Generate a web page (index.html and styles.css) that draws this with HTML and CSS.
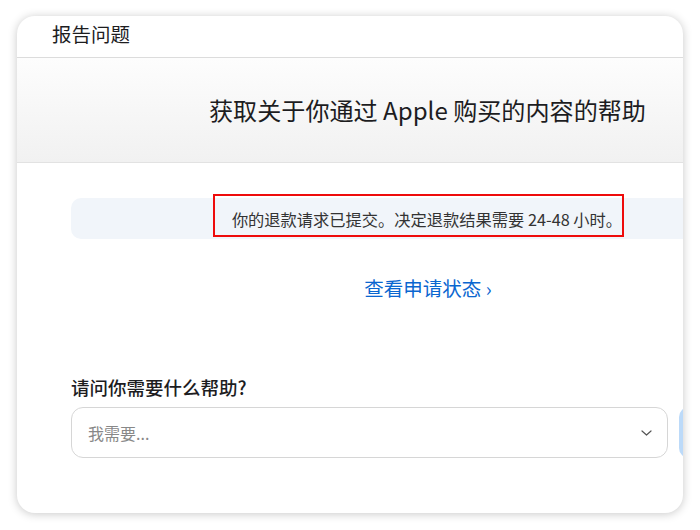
FILE: index.html
```html
<!DOCTYPE html>
<html lang="zh-CN">
<head>
<meta charset="utf-8">
<title>报告问题</title>
<link rel="stylesheet" href="styles.css">
</head>
<body>
<div class="card">
  <header class="topbar">报告问题</header>
  <section class="hero">
    <h1 class="hero-title">获取关于你通过 Apple 购买的内容的帮助</h1>
  </section>
  <main class="content">
    <div class="notice">
      <p class="notice-text">你的退款请求已提交。决定退款结果需要 24-48 小时。</p>
      <div class="highlight"></div>
    </div>
    <a class="status-link" href="#">查看申请状态 ›</a>
    <label class="question">请问你需要什么帮助?</label>
    <div class="select-row">
      <div class="select">
        <span class="placeholder">我需要...</span>
        <svg class="chevron" width="11" height="6" viewBox="0 0 11 6"><path d="M1 1 L5.5 5 L10 1" fill="none" stroke="#555" stroke-width="1.2" stroke-linecap="round" stroke-linejoin="round"/></svg>
      </div>
      <div class="next-btn"></div>
    </div>
  </main>
</div>
</body>
</html>
```
FILE: styles.css
```css
* { box-sizing: border-box; }
html, body { margin: 0; padding: 0; background: #fff; }
body {
  font-family: "Noto Sans CJK SC", "Noto Sans", sans-serif;
  color: #1d1d1f;
  padding: 16px 17px 17px 17px;
}
.card {
  width: 666px;
  height: 497px;
  background: #fff;
  border-radius: 18px;
  box-shadow: 0 1px 10px rgba(0,0,0,0.22);
  overflow: hidden;
  display: flex;
  flex-direction: column;
}
.topbar {
  height: 42px;
  flex: none;
  padding: 5px 0 0 35px;
  font-size: 19.5px;
  line-height: 26px;
  color: #1d1d1f;
  border-bottom: 1px solid #dcdcdc;
}
.hero {
  height: 105px;
  flex: none;
  display: flex;
  align-items: center;
  padding-left: 192px;
  background: linear-gradient(#fdfdfd, #f1f1f1);
  border-bottom: 1px solid #e2e2e2;
}
.hero-title {
  margin: 0;
  font-size: 24.1px;
  font-weight: 400;
  line-height: 30px;
  white-space: nowrap;
  color: #1d1d1f;
}
.content {
  padding: 35px 0 0 54px;
  display: flex;
  flex-direction: column;
  align-items: flex-start;
}
.notice {
  position: relative;
  width: 706px;
  height: 41px;
  flex: none;
  background: #f1f5fa;
  border-radius: 10px;
  display: flex;
  align-items: center;
  justify-content: center;
}
.notice-text {
  margin: 0;
  font-size: 16.25px;
  line-height: 22px;
  color: #333;
  white-space: nowrap;
  padding-left: 6px;
}
.highlight {
  position: absolute;
  left: 142px;
  top: -4px;
  width: 411px;
  height: 43px;
  border: 2px solid #ee0b0b;
}
.status-link {
  margin-top: 36px;
  width: 706px;
  text-align: center;
  font-size: 19.5px;
  line-height: 26px;
  color: #0a66d0;
  text-decoration: none;
  padding-left: 8px;
}
.question {
  margin-top: 74px;
  font-size: 18.5px;
  line-height: 24px;
  font-weight: 500;
  color: #1d1d1f;
}
.select-row {
  margin-top: 8px;
  display: flex;
  gap: 11px;
}
.select {
  width: 597px;
  height: 51px;
  flex: none;
  border: 1px solid #d6d6d6;
  border-radius: 12px;
  display: flex;
  align-items: center;
  justify-content: space-between;
  padding: 0 15px 0 16px;
}
.placeholder {
  font-size: 16px;
  color: #888;
}
.chevron { display: block; }
.next-btn {
  width: 80px;
  height: 51px;
  flex: none;
  border-radius: 10px;
  background: #bcdaf9;
}
```
